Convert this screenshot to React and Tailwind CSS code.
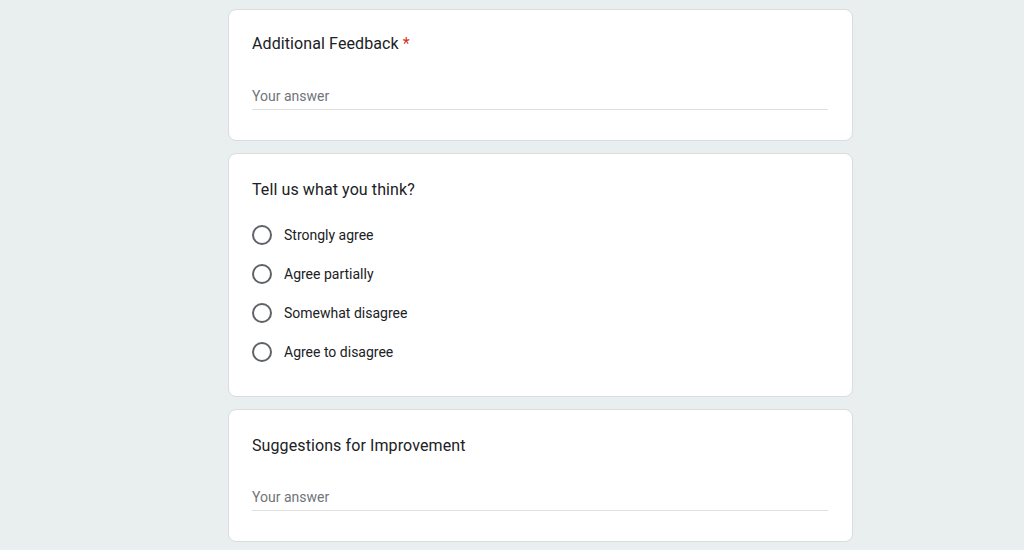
import React from 'react';

const font = { fontFamily: 'Roboto, "Liberation Sans", sans-serif' };

const TextQuestion = ({ title, required, top = 'pt-[22px]', gap = 'mt-[28px]' }) => (
    <div className={`bg-white border border-[#dadce0] rounded-lg pl-[23px] pr-6 pb-[30px] ${top}`}>
        <div className="text-[16px] leading-6 text-[#202124] tracking-[0.1px]">
            {title}
            {required && <span className="text-[#d93025] ml-1">*</span>}
        </div>
        <div className={`border-b border-[#e0e0e0] pb-[1px] ${gap}`}>
            <span className="text-[14px] leading-5 text-[#70757a]">Your answer</span>
        </div>
    </div>
);

const options = ['Strongly agree', 'Agree partially', 'Somewhat disagree', 'Agree to disagree'];

const RadioQuestion = () => (
    <div className="bg-white border border-[#dadce0] rounded-lg pl-[23px] pr-6 pt-6 pb-[34px]">
        <div className="text-[16px] leading-6 text-[#202124] tracking-[0.1px]">Tell us what you think?</div>
        <div className="mt-[23px] flex flex-col gap-[19px]">
            {options.map(opt => (
                <label key={opt} className="flex items-center gap-3 h-5">
                    <span className="w-5 h-5 rounded-full border-2 border-[#5f6368] shrink-0" />
                    <span className="text-[14px] leading-5 text-[#202124]">{opt}</span>
                </label>
            ))}
        </div>
    </div>
);

const App = () => {
    return (
        <div className="min-h-screen bg-[#e8efee] pt-[9px] pl-[228px]" style={font}>
            <div className="w-[625px] flex flex-col gap-3">
                <TextQuestion title="Additional Feedback" required />
                <RadioQuestion />
                <TextQuestion title="Suggestions for Improvement" top="pt-6" gap="mt-[27px]" />
            </div>
        </div>
    );
};

export default App;
